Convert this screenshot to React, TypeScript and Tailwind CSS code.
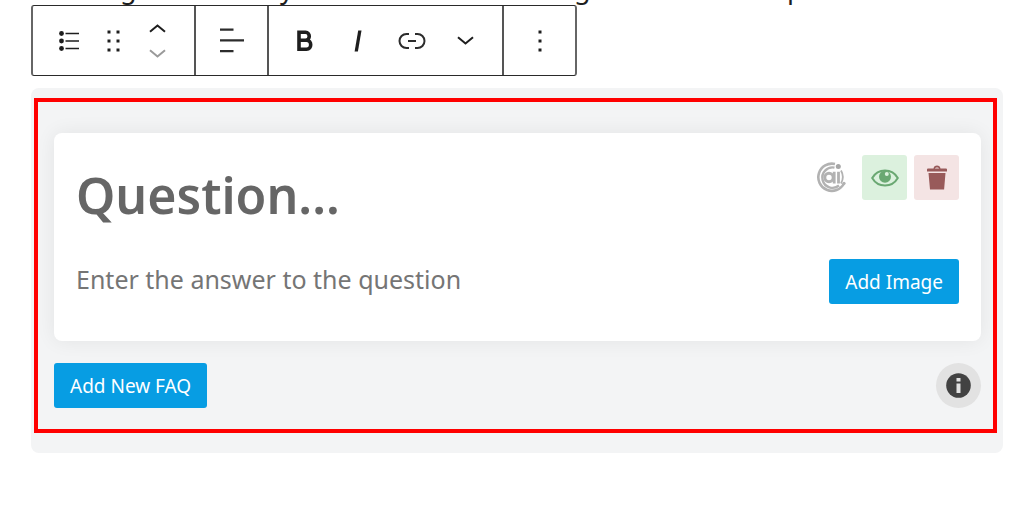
import React from "react";

const iconButton =
  "flex h-[45px] w-[45px] items-center justify-center rounded-[3px]";
const primaryButton =
  "h-[45px] rounded-[3px] bg-[#079de3] px-4 pt-px text-[19px] leading-6 text-white";

function ListIcon() {
  return (
    <svg width="22" height="22" viewBox="0 0 22 22" fill="#1e1e1e" aria-hidden="true">
      <circle cx="3.5" cy="3.5" r="2.4" />
      <circle cx="3.5" cy="11" r="2.4" />
      <circle cx="3.5" cy="18.5" r="2.4" />
      <path d="M7.5 2.8h13.500v1.500H7.500zM7.500 10.300h13.500v1.500H7.500zM7.500 17.800h13.500v1.500H7.500z" />
    </svg>
  );
}

function DragIcon() {
  return (
    <svg width="14" height="22" viewBox="0 0 14 22" fill="#1e1e1e" aria-hidden="true">
      <path d="M.5.500h3v3h-3zM9.500.500h3v3h-3zM.5 9.500h3v3h-3zM9.500 9.500h3v3h-3zM.5 18.500h3v3h-3zM9.500 18.500h3v3h-3z" />
    </svg>
  );
}

function Chevron({ up, faded }: { up?: boolean; faded?: boolean }) {
  return (
    <svg
      width="17"
      height="9"
      viewBox="0 0 17 9"
      fill="none"
      stroke={faded ? "#9a9a9a" : "#1e1e1e"}
      strokeWidth="2"
      aria-hidden="true"
    >
      <path d={up ? "M1 7.800 8.500 1.500 16 7.800" : "M1 1.200 8.500 7.500 16 1.200"} />
    </svg>
  );
}

function AlignIcon() {
  return (
    <svg width="24" height="25" viewBox="0 0 24 25" fill="#2c2c2c" aria-hidden="true">
      <path d="M0 .500h13.500v2.200H0zM0 11.200h24v2.200H0zM0 22h13.500v2.200H0z" />
    </svg>
  );
}

function BoldIcon() {
  return (
    <svg width="18" height="22" viewBox="0 0 18 22" fill="none" stroke="#1e1e1e" strokeWidth="3.600" aria-hidden="true">
      <path d="M3 2.300h6.500c5 0 5 8 0 8H3M3 10.300h7.500c5.600 0 5.600 9 0 9H3M3 .6v20.500" />
    </svg>
  );
}

function ItalicIcon() {
  return (
    <svg width="8" height="22" viewBox="0 0 8 22" fill="#1e1e1e" aria-hidden="true">
      <path d="M4.200.500h3.300l-3.600 21H.600z" />
    </svg>
  );
}

function LinkIcon() {
  return (
    <svg width="28" height="18" viewBox="0 0 28 18" fill="none" stroke="#2c2c2c" strokeWidth="2" aria-hidden="true">
      <path d="M11 2H8.500a7 7 0 0 0 0 14H11M17 2h2.500a7 7 0 0 1 0 14H17M10 9h8" />
    </svg>
  );
}

function MoreIcon() {
  return (
    <svg width="4" height="22" viewBox="0 0 4 22" fill="#1e1e1e" aria-hidden="true">
      <path d="M.5.500h3v3h-3zM.5 9.500h3v3h-3zM.5 18.500h3v3h-3z" />
    </svg>
  );
}

function AiIcon() {
  return (
    <svg width="30" height="31" viewBox="0 0 30 31" fill="none" stroke="#b2b2b2" aria-hidden="true">
      <path d="M19 2A13.600 13.600 0 1 0 28 21.500" strokeWidth="2.600" />
      <path d="M18.500 5.600A10.200 10.200 0 1 0 23 23.500" strokeWidth="2.400" />
      <circle cx="13" cy="15.500" r="4.200" strokeWidth="3" />
      <path d="M18.200 9.800v11.700M22.500 9.800v11.700" strokeWidth="2.800" />
      <path d="M25 8.500c2.300 4 2.300 9 0 13" strokeWidth="1.800" />
      <circle cx="22.300" cy="4.600" r="2.500" fill="#a6a6a6" stroke="none" />
      <circle cx="28" cy="21.300" r="1.600" fill="#b2b2b2" stroke="none" />
    </svg>
  );
}

function EyeIcon() {
  return (
    <svg width="28" height="18" viewBox="0 0 28 18" aria-hidden="true">
      <path d="M1.200 9C7-1 21-1 26.800 9 21 19 7 19 1.200 9z" fill="none" stroke="#6aa872" strokeWidth="2" />
      <circle cx="14" cy="7.800" r="6" fill="#6aa872" />
      <circle cx="15.800" cy="5" r="2" fill="#dcf1de" />
    </svg>
  );
}

function TrashIcon() {
  return (
    <svg width="20" height="25" viewBox="0 0 20 25" fill="#985a5a" aria-hidden="true">
      <path d="M1 3.500h5.500C7 1.200 8 .5 10 .5s3 .7 3.500 3H19q1 0 1 1v2H0v-2q0-1 1-1zM8 3.500h4c-.3-1.400-3.700-1.400-4 0zM1.500 8h17l-1.400 16.500H3z" />
    </svg>
  );
}

function InfoIcon() {
  return (
    <svg width="25" height="25" viewBox="0 0 25 25" aria-hidden="true">
      <circle cx="12.500" cy="12.500" r="12.300" fill="#424242" />
      <path d="M10.500 5h4v3.500h-4zM10.500 10.500h4V20h-4z" fill="#e2e2e2" />
    </svg>
  );
}

export default function App() {
  return (
    <main className="min-h-screen bg-white pr-[21px] pl-[31px] font-['Noto_Sans','Open_Sans',sans-serif]">
      <p className="flex h-[5px] items-end overflow-hidden text-[27px] leading-[34px] text-[#1e1e1e]">
        <span className="ml-[89px] w-[160px]">g</span>
        <span className="w-[294px]">y</span>
        <span className="w-[213px]">g</span>
        <span>p</span>
      </p>

      <div
        role="toolbar"
        aria-label="Block tools"
        className="flex h-[71px] w-fit divide-x-2 divide-[#555] rounded-[3px] border-x-2 border-y border-x-[#666] border-y-[#2a2a2a]"
      >
        <div className="flex w-[163px] items-center pl-[25px]">
          <button aria-label="FAQ block"><ListIcon /></button>
          <button aria-label="Drag" className="ml-[27px]"><DragIcon /></button>
          <div className="ml-[28px] flex flex-col gap-[16px]">
            <button aria-label="Move up"><Chevron up /></button>
            <button aria-label="Move down"><Chevron faded /></button>
          </div>
        </div>
        <button aria-label="Align" className="flex w-[73px] items-center justify-center">
          <AlignIcon />
        </button>
        <div className="flex w-[235px] items-center pl-[27px]">
          <button aria-label="Bold"><BoldIcon /></button>
          <button aria-label="Italic" className="ml-[40px]"><ItalicIcon /></button>
          <button aria-label="Link" className="ml-[36px]"><LinkIcon /></button>
          <button aria-label="More formatting" className="ml-[31px]"><Chevron /></button>
        </div>
        <button aria-label="Options" className="flex w-[71px] items-center justify-center">
          <MoreIcon />
        </button>
      </div>

      <section className="mt-[12px] rounded-[8px] bg-[#f3f4f5] pt-[10px] pr-[6px] pb-[20px] pl-[3px]">
        <div className="border-4 border-[#ff0000] pt-[31px] pr-[12px] pb-[21px] pl-[16px]">
          <article className="flex h-[208px] justify-between rounded-[8px] bg-white px-[22px] pt-[22px] shadow-[0_0_20px_rgba(0,0,0,0.07)]">
            <div className="min-w-0 flex-1">
              <input
                aria-label="Question"
                placeholder="Question..."
                className="block h-[80px] w-full text-[50px] font-semibold text-[#666] outline-none placeholder:text-[#666] placeholder:opacity-100"
              />
              <input
                aria-label="Answer"
                placeholder="Enter the answer to the question"
                className="mt-[24px] block h-[40px] w-full text-[25px] text-[#757575] outline-none placeholder:text-[#757575] placeholder:opacity-100"
              />
            </div>
            <div className="flex flex-col items-end gap-[59px]">
              <div className="flex items-center gap-[7px]">
                <button aria-label="AI assistant" className="mr-[9px]"><AiIcon /></button>
                <button aria-label="Toggle visibility" className={`${iconButton} bg-[#dcf1de]`}><EyeIcon /></button>
                <button aria-label="Delete" className={`${iconButton} bg-[#f4e4e4]`}><TrashIcon /></button>
              </div>
              <button className={primaryButton}>Add Image</button>
            </div>
          </article>
          <div className="mt-[22px] flex items-center justify-between">
            <button className={primaryButton}>Add New FAQ</button>
            <button aria-label="Information" className="flex h-[45px] w-[45px] items-center justify-center rounded-full bg-[#e2e2e2]">
              <InfoIcon />
            </button>
          </div>
        </div>
      </section>
    </main>
  );
}
